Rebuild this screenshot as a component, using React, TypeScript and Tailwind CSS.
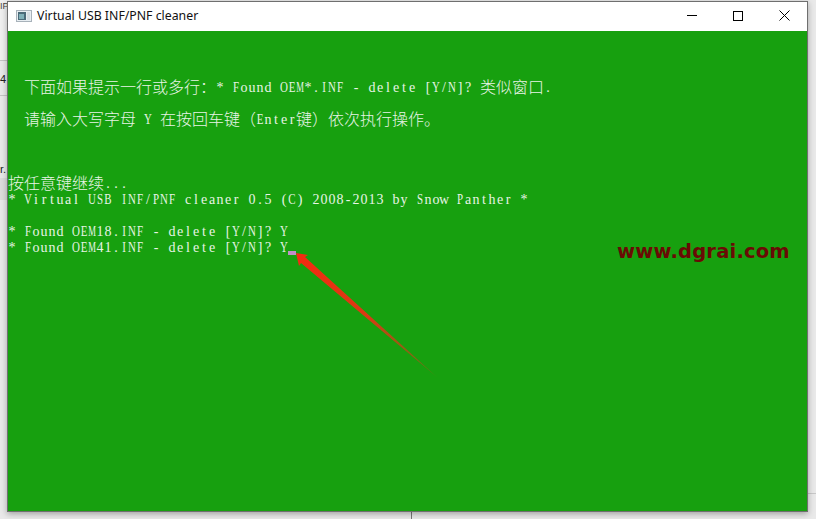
import React from 'react';

// The console font is a fixed 8px grid with serifs and nothing installed has that,
// so each latin character sits in its own one-column cell, wide ones squeezed to fit
const T = ({ children }: { children: string }) => (
  <>
    {children.split('').map((c, i) => (
      <span
        key={i}
        className={`inline-flex w-2 justify-center ${
          'mMW'.includes(c) ? 'scale-x-[0.62]' : /[A-Z]/.test(c) ? 'scale-x-[0.78]' : ''
        }`}
      >
        {c === ' ' ? '\u00a0' : c}
      </span>
    ))}
  </>
);

// CJK cells are two console columns wide
const Zh = ({ children }: { children: string }) => (
  <span className="relative top-px font-['Noto_Sans_CJK_SC',sans-serif] text-[16px] font-light leading-[0]">{children}</span>
);

const Line = ({ children }: { children?: React.ReactNode }) => (
  <div className="h-4 leading-4 whitespace-pre">{children}</div>
);

const App = () => {
  return (
    <div className="relative w-[816px] h-[519px] overflow-hidden bg-[#e9e9e9] pl-[7px] pt-px">
      {/* Stuff peeking out behind the window */}
      <div className="absolute left-0 top-0 w-[7px] h-[60px] bg-[#f0f0f0]" />
      <div className="absolute left-0 top-[60px] w-[7px] h-px bg-[#c4c4c4]" />
      <div className="absolute left-0 top-[95px] w-[7px] h-px bg-[#c4c4c4]" />
      <span className="absolute left-0 top-0 text-[9px] leading-3 text-[#444] font-['Liberation_Sans',sans-serif]">IP</span>
      <span className="absolute left-0 top-[71px] text-[11px] leading-4 text-[#222] font-['Liberation_Sans',sans-serif]">4</span>
      <span className="absolute left-0 top-[161px] text-[11px] leading-4 text-[#222] font-['Liberation_Sans',sans-serif]">r.</span>
      <div className="absolute left-0 top-[178px] w-[7px] h-[22px] bg-[#dcdcdc]" />
      <div className="absolute left-[411px] top-[512px] w-px h-[7px] bg-[#777]" />
      <div className="absolute left-[808px] top-[493px] w-2 h-px bg-[#c8c8c8]" />

      {/* Console window */}
      <div className="relative z-10 w-[801px] h-[511px] flex flex-col border border-[#6f6f6f] shadow-[0_2px_6px_rgba(0,0,0,0.3)]">
        <div className="h-[29px] shrink-0 bg-white flex items-center pb-[2px]">
          <svg width="16" height="16" viewBox="0 0 16 16" className="ml-2">
            <rect x="0.5" y="2.5" width="15" height="11" fill="#e8eef2" stroke="#a8b2ba" />
            <rect x="2" y="4" width="8" height="8" fill="#4a6a78" />
            <rect x="3" y="6" width="5" height="5" fill="#7fb0b8" />
            <rect x="11" y="4" width="3" height="8" fill="#d5dde2" />
          </svg>
          <span className="ml-[5px] mt-[2px] text-[12.3px] text-[#111] font-['Noto_Sans','Open_Sans',sans-serif]">Virtual USB INF/PNF cleaner</span>
          <div className="ml-auto flex h-full items-center">
            <div className="w-[46px] flex justify-center">
              <div className="w-[10px] h-px bg-black" />
            </div>
            <div className="w-[46px] flex justify-center">
              <div className="w-[10px] h-[10px] border border-black" />
            </div>
            <div className="w-[46px] flex justify-center">
              <svg width="11" height="11" viewBox="0 0 11 11" stroke="#000" strokeWidth="1">
                <path d="M0.5 0.5L10.5 10.5M10.5 0.5L0.5 10.5" />
              </svg>
            </div>
          </div>
        </div>

        <div className="relative flex-1 bg-[#17a00f] text-[#e8f4e6] text-[14px] font-['Liberation_Serif',serif] pt-[49px]">
          <Line>
            <T>{'  '}</T><Zh>下面如果提示一行或多行：</Zh><T>* Found OEM*.INF - delete [Y/N]? </T><Zh>类似窗口</Zh><T>.</T>
          </Line>
          <Line />
          <Line>
            <T>{'  '}</T><Zh>请输入大写字母</Zh><T> Y </T><Zh>在按回车键（</Zh><T>Enter</T><Zh>键）依次执行操作。</Zh>
          </Line>
          <Line />
          <Line />
          <Line />
          <Line>
            <Zh>按任意键继续</Zh><T>...</T>
          </Line>
          <Line><T>* Virtual USB INF/PNF cleaner 0.5 (C) 2008-2013 by Snow Panther *</T></Line>
          <Line />
          <Line><T>* Found OEM18.INF - delete [Y/N]? Y</T></Line>
          <Line>
            <T>* Found OEM41.INF - delete [Y/N]? Y</T>
            {/* Text cursor */}
            <span className="inline-block w-2 h-1 bg-[#c08fc8] align-[-3px]" />
          </Line>

          {/* Annotation arrow */}
          <svg className="absolute left-[270px] top-[210px]" width="170" height="140" viewBox="0 0 170 140">
            <defs>
              <linearGradient id="tail" x1="0" y1="0" x2="1" y2="1">
                <stop offset="0" stopColor="#f52a10" />
                <stop offset="0.5" stopColor="#d93a14" />
                <stop offset="0.85" stopColor="#7d6a14" />
                <stop offset="1" stopColor="#3d8c10" />
              </linearGradient>
            </defs>
            <path d="M18 12L30 14L27 16L160 137L23 22L21 25Z" fill="url(#tail)" />
          </svg>

          {/* Watermark */}
          <span className="absolute left-[609px] top-[209px] text-[19.5px] leading-6 font-bold tracking-[0.2px] text-[#6a0a05] font-['DejaVu_Sans',sans-serif]">www.dgrai.com</span>
        </div>
      </div>
    </div>
  );
};

export default App;
